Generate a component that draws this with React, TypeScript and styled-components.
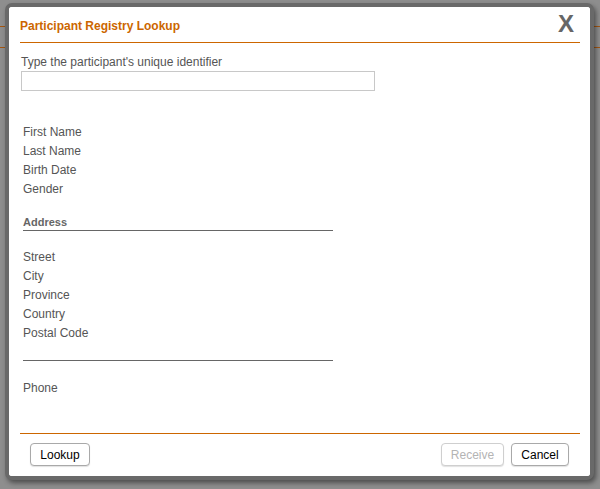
import React from "react";
import styled, { createGlobalStyle } from "styled-components";

const Global = createGlobalStyle`
  html, body { margin: 0; padding: 0; }
  body {
    width: 600px;
    height: 489px;
    overflow: hidden;
    background: #8e8e8e;
    font-family: "Liberation Sans", Arial, sans-serif;
  }
`;

const Page = styled.div`
  position: relative;
  width: 600px;
  height: 489px;
  padding-top: 26px;
  box-sizing: border-box;
`;

const PageRule = styled.div<{ $gap?: number }>`
  height: 1px;
  background: #a4550f;
  margin-top: ${(p) => p.$gap ?? 0}px;
`;

const Dialog = styled.div`
  position: absolute;
  left: 5px;
  top: 3px;
  width: 581px;
  height: 469px;
  border: 4px solid #696969;
  border-radius: 7px;
  box-shadow: 2px 3px 5px rgba(0, 0, 0, 0.45);
  background: #fff;
  display: flex;
  flex-direction: column;
  box-sizing: content-box;
`;

const Inner = styled.div`
  display: flex;
  flex-direction: column;
  height: 100%;
  padding: 0 10px 0 11px;
  border-radius: 3px;
  background: #fff;
`;

const Header = styled.div`
  display: flex;
  justify-content: space-between;
  align-items: flex-start;
  padding-top: 5px;
  padding-bottom: 6px;
  border-bottom: 1px solid #cc6600;
`;

const Title = styled.div`
  margin-top: 7px;
  font-size: 12px;
  line-height: 14px;
  font-weight: bold;
  color: #cc6600;
`;

const Close = styled.div`
  font-size: 24px;
  line-height: 24px;
  font-weight: bold;
  color: #666;
  margin-right: 6px;
  cursor: pointer;
`;

const Body = styled.div`
  flex: 1;
  display: flex;
  flex-direction: column;
`;

const PromptLabel = styled.div`
  margin-top: 12px;
  font-size: 12px;
  line-height: 14px;
  color: #555;
  padding-left: 1px;
`;

const IdInput = styled.input`
  margin-top: 2px;
  margin-left: 1px;
  width: 354px;
  height: 20px;
  box-sizing: border-box;
  border: 1px solid #c8c8c8;
  padding: 0 3px;
  font-family: inherit;
  font-size: 12px;
  outline: none;
`;

const FieldGroup = styled.div<{ $top: number }>`
  margin-top: ${(p) => p.$top}px;
  padding-left: 3px;
  display: flex;
  flex-direction: column;
`;

const Field = styled.div`
  font-size: 12px;
  line-height: 19px;
  color: #555;
`;

const SectionHead = styled.div`
  margin-top: 15px;
  margin-left: 3px;
  width: 310px;
  font-size: 11px;
  line-height: 16px;
  font-weight: bold;
  color: #666;
  border-bottom: 1px solid #666;
`;

const Divider = styled.div`
  margin-top: 17px;
  margin-left: 3px;
  width: 310px;
  height: 1px;
  background: #666;
`;

const Footer = styled.div`
  border-top: 1px solid #cc6600;
  padding: 9px 11px 10px 10px;
  display: flex;
  align-items: center;
`;

const Spacer = styled.div`
  flex: 1;
`;

const Button = styled.button<{ $w: number }>`
  width: ${(p) => p.$w}px;
  height: 23px;
  box-sizing: border-box;
  background: #fff;
  border: 1px solid #a9a9a9;
  border-radius: 4px;
  box-shadow: 0 1px 1px rgba(0, 0, 0, 0.12);
  font-family: inherit;
  font-size: 12px;
  color: #000;
  padding: 0;
  margin-left: 7px;
  &:first-child {
    margin-left: 0;
  }
  &:disabled {
    color: #b4b4b4;
    border-color: #cfcfcf;
  }
`;

export default function App() {
  return (
    <>
      <Global />
      <Page>
        <PageRule />
        <PageRule $gap={20} />
        <Dialog>
          <Inner>
            <Header>
              <Title>Participant Registry Lookup</Title>
              <Close>X</Close>
            </Header>
            <Body>
              <PromptLabel>Type the participant's unique identifier</PromptLabel>
              <IdInput type="text" />
              <FieldGroup $top={32}>
                <Field>First Name</Field>
                <Field>Last Name</Field>
                <Field>Birth Date</Field>
                <Field>Gender</Field>
              </FieldGroup>
              <SectionHead>Address</SectionHead>
              <FieldGroup $top={17}>
                <Field>Street</Field>
                <Field>City</Field>
                <Field>Province</Field>
                <Field>Country</Field>
                <Field>Postal Code</Field>
              </FieldGroup>
              <Divider />
              <FieldGroup $top={18}>
                <Field>Phone</Field>
              </FieldGroup>
            </Body>
            <Footer>
              <Button $w={60}>Lookup</Button>
              <Spacer />
              <Button $w={63} disabled>
                Receive
              </Button>
              <Button $w={58}>Cancel</Button>
            </Footer>
          </Inner>
        </Dialog>
      </Page>
    </>
  );
}
